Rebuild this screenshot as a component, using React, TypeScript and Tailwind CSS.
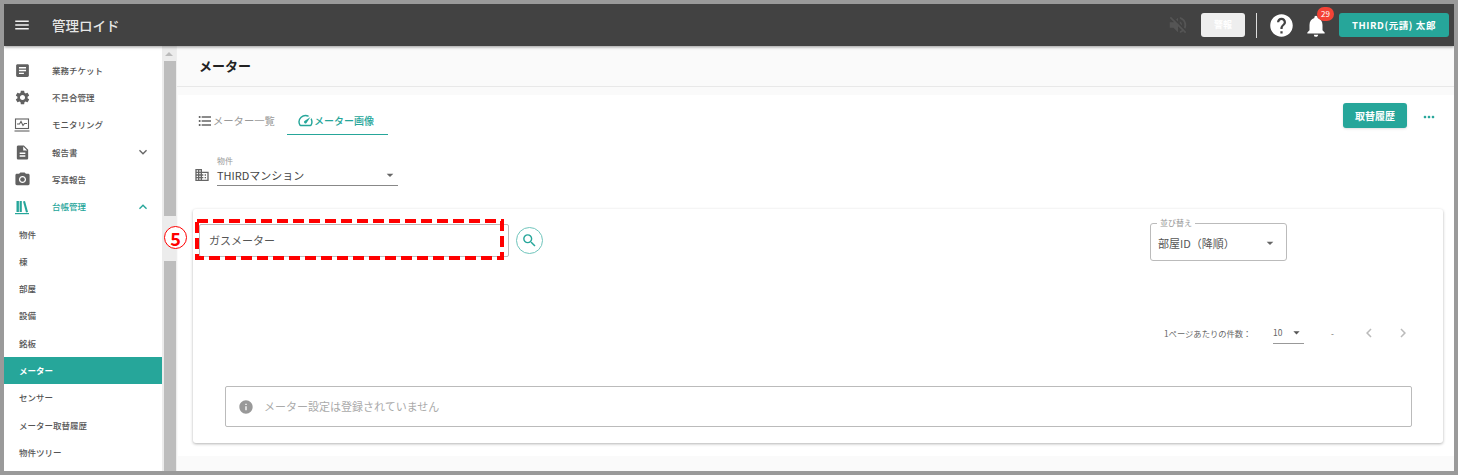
import { FunctionComponent, ReactNode } from "react";
import {
  MdMenu, MdArticle, MdSettings, MdDescription, MdPhotoCamera, MdExpandMore, MdExpandLess,
  MdSpeed, MdDomain, MdSearch, MdMoreHoriz, MdInfo, MdNotifications, MdHelp, MdVolumeOff,
  MdArrowDropDown, MdChevronLeft, MdChevronRight, MdFormatListBulleted,
} from "react-icons/md";

const MonitorIcon = () => (
  <svg width="16" height="16" viewBox="0 0 16 16" fill="none" stroke="#616161" strokeWidth="1.1">
    <rect x="1.5" y="2" width="13" height="9.5" />
    <path d="M3 7h2.5l1.5-2.5 2 4 1.5-2H13" />
    <path d="M0.5 14h15" />
  </svg>
);

const BooksIcon = () => (
  <svg width="16" height="16" viewBox="0 0 16 16" fill="#26a69a">
    <rect x="2.5" y="2" width="2.4" height="11" />
    <rect x="5.6" y="2" width="2.2" height="11" />
    <path d="M9 2.6l2-.6 3 11-2 .5z" />
    <rect x="1" y="14" width="14" height="1.2" />
  </svg>
);

const parents: { label: string; icon: ReactNode; chevron?: "down" | "up"; active?: boolean }[] = [
  { label: "業務チケット", icon: <MdArticle size={17} color="#616161" /> },
  { label: "不具合管理", icon: <MdSettings size={17} color="#616161" /> },
  { label: "モニタリング", icon: <MonitorIcon /> },
  { label: "報告書", icon: <MdDescription size={17} color="#616161" />, chevron: "down" },
  { label: "写真報告", icon: <MdPhotoCamera size={17} color="#616161" /> },
  { label: "台帳管理", icon: <BooksIcon />, chevron: "up", active: true },
];

const children = ["物件", "棟", "部屋", "設備", "銘板", "メーター", "センサー", "メーター取替履歴", "物件ツリー"];

const Sidebar: FunctionComponent = () => (
  <div className="w-[158px] shrink-0 bg-white pt-[10.5px] overflow-hidden">
    {parents.map((p) => (
      <div key={p.label} className="h-[27.3px] flex items-center pl-[10px] pr-[11px]">
        <span className="w-[38px] flex">{p.icon}</span>
        <span className={p.active ? "text-[8.5px] font-medium text-[#26a69a]" : "text-[8.5px] font-medium text-[#555]"}>{p.label}</span>
        {p.chevron === "down" && <MdExpandMore size={16} color="#666" className="ml-auto" />}
        {p.chevron === "up" && <MdExpandLess size={16} color="#26a69a" className="ml-auto" />}
      </div>
    ))}
    {children.map((c) => (
      <div
        key={c}
        className={
          c === "メーター"
            ? "h-[27.3px] flex items-center pl-[15px] text-[8.5px] font-bold text-white bg-[#26a69a]"
            : "h-[27.3px] flex items-center pl-[15px] text-[8.5px] font-medium text-[#555]"
        }
      >
        {c}
      </div>
    ))}
  </div>
);

const Scrollbar: FunctionComponent = () => (
  <div className="w-[14px] shrink-0 flex flex-col bg-[#ececec]">
    <div className="h-[15px] flex items-center justify-center">
      <div className="w-0 h-0 border-x-[4px] border-x-transparent border-b-[4px] border-b-[#bbb]" />
    </div>
    <div className="h-[155px] bg-[#bdbdbd] ml-[2px]" />
    <div className="h-[45px]" />
    <div className="flex-1 bg-[#bdbdbd] ml-[2px]" />
  </div>
);

const App: FunctionComponent = () => {
  return (
    <div className="relative w-[1458px] h-[475px] border-[4px] border-[#9a9a9a] flex flex-col overflow-hidden font-['Noto_Sans_CJK_JP','Noto_Sans',sans-serif] bg-white">
      <header className="h-[42px] shrink-0 bg-[#424242] flex items-center shadow-[0_1px_3px_rgba(0,0,0,0.4)] z-10 pl-[9px] pr-[5px]">
        <MdMenu size={18} color="#f2f2f2" />
        <span className="ml-[21px] text-[13.5px] font-medium text-[#e6e6e6]">管理ロイド</span>
        <MdVolumeOff size={22} color="#555" className="ml-auto" />
        <div className="ml-[12px] w-[44px] h-[24px] bg-[#eee] rounded-[3px] flex items-center justify-center text-[9px] font-bold text-white">警報</div>
        <div className="ml-[11px] w-px h-[25px] bg-[#ddd]" />
        <MdHelp size={27} color="#fff" className="ml-[11px]" />
        <div className="relative ml-[8px] w-[26px] h-[26px] mt-[2px]">
          <MdNotifications size={26} color="#fff" />
          <span className="absolute -top-[6px] left-[14px] w-[17px] h-[14px] rounded-full bg-[#f44336] text-white text-[8px] leading-[14px] text-center">29</span>
        </div>
        <div className="ml-[10px] w-[110px] h-[24px] bg-[#26a69a] rounded-[3px] flex items-center justify-center text-[9.5px] font-bold tracking-[0.6px] text-white">THIRD(元請) 太郎</div>
      </header>

      <div className="flex-1 flex min-h-0">
        <Sidebar />
        <Scrollbar />
        <main className="flex-1 flex flex-col bg-[#fafafa] min-w-0 border-l border-[#eee]">
          <div className="h-[41px] shrink-0 flex items-center pl-[22px] border-b border-[#e8e8e8]">
            <h1 className="text-[13px] font-bold text-[#222]">メーター</h1>
          </div>
          <div className="h-[8px] shrink-0" />
          <section className="relative h-[361px] bg-white ml-[1px] pl-[15px] pr-[11px]">
            <div className="flex items-start h-[56px]">
              <div className="mt-[11px] w-[87px] h-[29px] flex items-center pl-[4px] text-[10.3px] text-[#999]">
                <MdFormatListBulleted size={16} color="#666" />
                メーター一覧
              </div>
              <div className="mt-[11px] ml-[7px] w-[101px] h-[29px] flex items-center pl-[10px] text-[10px] font-medium text-[#26a69a] border-b border-[#26a69a]">
                <MdSpeed size={17} color="#26a69a" />
                メーター画像
              </div>
              <div className="ml-auto mt-[8px] mr-[36px] w-[64px] h-[25px] bg-[#26a69a] rounded-[3px] shadow flex items-center justify-center text-[10px] font-bold text-white">取替履歴</div>
              <MdMoreHoriz size={16} color="#26a69a" className="absolute right-[17px] top-[14px]" />
            </div>

            <div className="flex items-end h-[35px] pl-[1px]">
              <MdDomain size={16} color="#666" className="mb-[3px]" />
              <div className="ml-[7px] w-[181px] border-b border-[#888] h-[35px] pt-[4px] relative">
                <div className="text-[8px] leading-[12px] text-[#999]">物件</div>
                <div className="text-[11px] leading-[16px] text-[#444]">THIRDマンション</div>
                <MdArrowDropDown size={16} color="#666" className="absolute right-0 top-[16px]" />
              </div>
            </div>

            <div className="mt-[23px] h-[234px] rounded-[3px] bg-white shadow-[0_1px_3px_rgba(0,0,0,0.3)] relative">
              <div className="flex items-start pt-[15px] pl-[6px]">
                <div className="w-[310px] h-[33px] border border-[#bbb] rounded-[2px] flex items-center pl-[9px] text-[11px] text-[#555]">ガスメーター</div>
                <div className="ml-[7px] mt-[3px] w-[27px] h-[27px] rounded-full border border-[#6fc5bc] flex items-center justify-center">
                  <MdSearch size={17} color="#26a69a" />
                </div>
                <div className="ml-auto mr-[156px] -mt-[1px] relative w-[137px] h-[38px] border border-[#bbb] rounded-[3px] flex items-center pl-[7px] pt-[2px] text-[11px] text-[#555]">
                  <span className="absolute -top-[6px] left-[6px] px-[3px] bg-white text-[8px] leading-[10px] text-[#999]">並び替え</span>
                  部屋ID（降順）
                  <MdArrowDropDown size={16} color="#666" className="absolute right-[8px] top-[11px]" />
                </div>
              </div>

              <div className="mt-[60px] flex items-center h-[24px] text-[8.3px] text-[#666] pl-[971px]">
                <span className="w-[109px]">1ページあたりの件数：</span>
                <div className="w-[31px] h-[22px] border-b border-[#999] flex items-center justify-between">
                  <span className="text-[8.5px]">10</span>
                  <MdArrowDropDown size={15} color="#555" />
                </div>
                <span className="ml-[27px] w-[29px]">-</span>
                <MdChevronLeft size={18} color="#bbb" />
                <MdChevronRight size={18} color="#bbb" className="ml-[16px]" />
              </div>

              <div className="mt-[41px] ml-[32px] mr-[31px] h-[41px] border border-[#bbb] rounded-[2px] flex items-center pl-[12px] gap-[10px] text-[11px] text-[#aaa]">
                <MdInfo size={16} color="#999" />
                メーター設定は登録されていません
              </div>
            </div>
          </section>
        </main>
      </div>

      {/* annotation overlays */}
      <svg className="absolute left-[191px] top-[215px]" width="309" height="41" fill="none">
        <rect x="2" y="2" width="305" height="37" stroke="#f00" strokeWidth="4" strokeDasharray="11 5" />
      </svg>
      <div className="absolute left-[160px] top-[222px] w-[23px] h-[23px] rounded-full bg-white border border-[#f00] flex items-center justify-center text-[18px] font-bold leading-none text-[#f00]">5</div>
    </div>
  );
};

export default App;
